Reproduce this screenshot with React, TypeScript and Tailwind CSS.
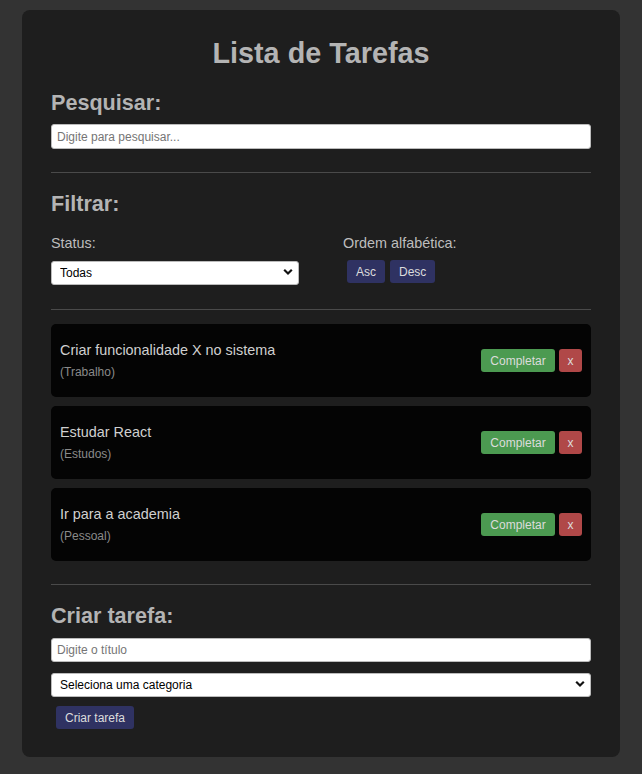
import React from "react";

const tasks = [
  { title: "Criar funcionalidade X no sistema", cat: "Trabalho" },
  { title: "Estudar React", cat: "Estudos" },
  { title: "Ir para a academia", cat: "Pessoal" },
];

function Chevron() {
  return (
    <svg
      width="10"
      height="7"
      viewBox="0 0 10 7"
      className="pointer-events-none absolute right-[6px] top-1/2 -translate-y-1/2"
    >
      <path d="M1.2 1.3 L5 5 L8.8 1.3" fill="none" stroke="#111" strokeWidth="2.2" />
    </svg>
  );
}

export default function App() {
  return (
    <div
      className="min-h-[774px] w-full bg-[#333333] pt-[10px] pb-[17px]"
      style={{ fontFamily: '"Liberation Sans", Arial, sans-serif' }}
    >
      <div className="mx-[22px] flex w-[598px] flex-col rounded-[8px] bg-[#1e1e1e] px-[29px] pt-[27px] pb-[28px]">
        <h1 className="h-[33px] text-center text-[28.8px] leading-[33px] font-bold text-[#b4b4b4]">
          Lista de Tarefas
        </h1>

        <h2 className="mt-[20px] h-[25px] text-[21.6px] leading-[25px] font-bold text-[#b4b4b4]">
          Pesquisar:
        </h2>
        <input
          className="mt-[9px] h-[25px] w-full rounded-[3px] border border-[#bbbbbb] bg-white px-[5px] text-[12px] text-black outline-none placeholder:text-[#757575]"
          placeholder="Digite para pesquisar..."
        />

        <div className="mt-[23px] h-px w-full bg-[#4a4a4a]" />

        <h2 className="mt-[18px] h-[25px] text-[21.6px] leading-[25px] font-bold text-[#b4b4b4]">
          Filtrar:
        </h2>

        <div className="mt-[19px] flex">
          <div className="flex w-[292px] flex-col">
            <span className="h-[17px] text-[14.4px] leading-[17px] text-[#bdbdbd]">Status:</span>
            <div className="relative mt-[8px] h-[24px] w-[248px]">
              <select className="h-[24px] w-full appearance-none rounded-[3px] border border-[#bbbbbb] bg-white pl-[8px] text-[12px] text-black outline-none">
                <option>Todas</option>
              </select>
              <Chevron />
            </div>
          </div>
          <div className="flex flex-col">
            <span className="h-[17px] text-[14.4px] leading-[17px] text-[#bdbdbd]">Ordem alfabética:</span>
            <div className="mt-[8px] ml-[4px] flex gap-[5px]">
              <button className="h-[23px] rounded-[3px] bg-[#2f3262] px-[9px] text-[12px] text-[#dcdcdc]">
                Asc
              </button>
              <button className="h-[23px] rounded-[3px] bg-[#2f3262] px-[9px] text-[12px] text-[#dcdcdc]">
                Desc
              </button>
            </div>
          </div>
        </div>

        <div className="mt-[25px] h-px w-full bg-[#4a4a4a]" />

        <div className="mt-[14px] flex flex-col gap-[9px]">
          {tasks.map((t) => (
            <div
              key={t.title}
              className="flex h-[73px] items-center justify-between rounded-[5px] bg-[#040404] px-[9px]"
            >
              <div className="mb-[2px] flex flex-col">
                <span className="h-[18px] text-[14.4px] leading-[18px] text-[#d0d0d0]">{t.title}</span>
                <span className="mt-[6px] h-[14px] text-[12px] leading-[14px] text-[#8a8a8a]">
                  ({t.cat})
                </span>
              </div>
              <div className="flex gap-[4px]">
                <button className="h-[23px] w-[74px] rounded-[3px] bg-[#4c9a51] text-[12px] text-[#dcdcdc]">
                  Completar
                </button>
                <button className="h-[23px] w-[23px] rounded-[3px] bg-[#b04848] text-[12px] text-[#dcdcdc]">
                  x
                </button>
              </div>
            </div>
          ))}
        </div>

        <div className="mt-[23px] h-px w-full bg-[#4a4a4a]" />

        <h2 className="mt-[18px] h-[25px] text-[21.6px] leading-[25px] font-bold text-[#b4b4b4]">
          Criar tarefa:
        </h2>
        <input
          className="mt-[10px] h-[24px] w-full rounded-[3px] border border-[#bbbbbb] bg-white px-[5px] text-[12px] text-black outline-none placeholder:text-[#757575]"
          placeholder="Digite o título"
        />
        <div className="relative mt-[10px] h-[24px] w-full">
          <select className="h-[24px] w-full appearance-none rounded-[3px] border border-[#bbbbbb] bg-white pl-[8px] text-[12px] text-black outline-none">
            <option>Seleciona uma categoria</option>
          </select>
          <Chevron />
        </div>
        <div className="mt-[10px] flex">
          <button className="ml-[5px] h-[23px] rounded-[3px] bg-[#2f3262] px-[9px] text-[12px] text-[#dcdcdc]">
            Criar tarefa
          </button>
        </div>
      </div>
    </div>
  );
}
